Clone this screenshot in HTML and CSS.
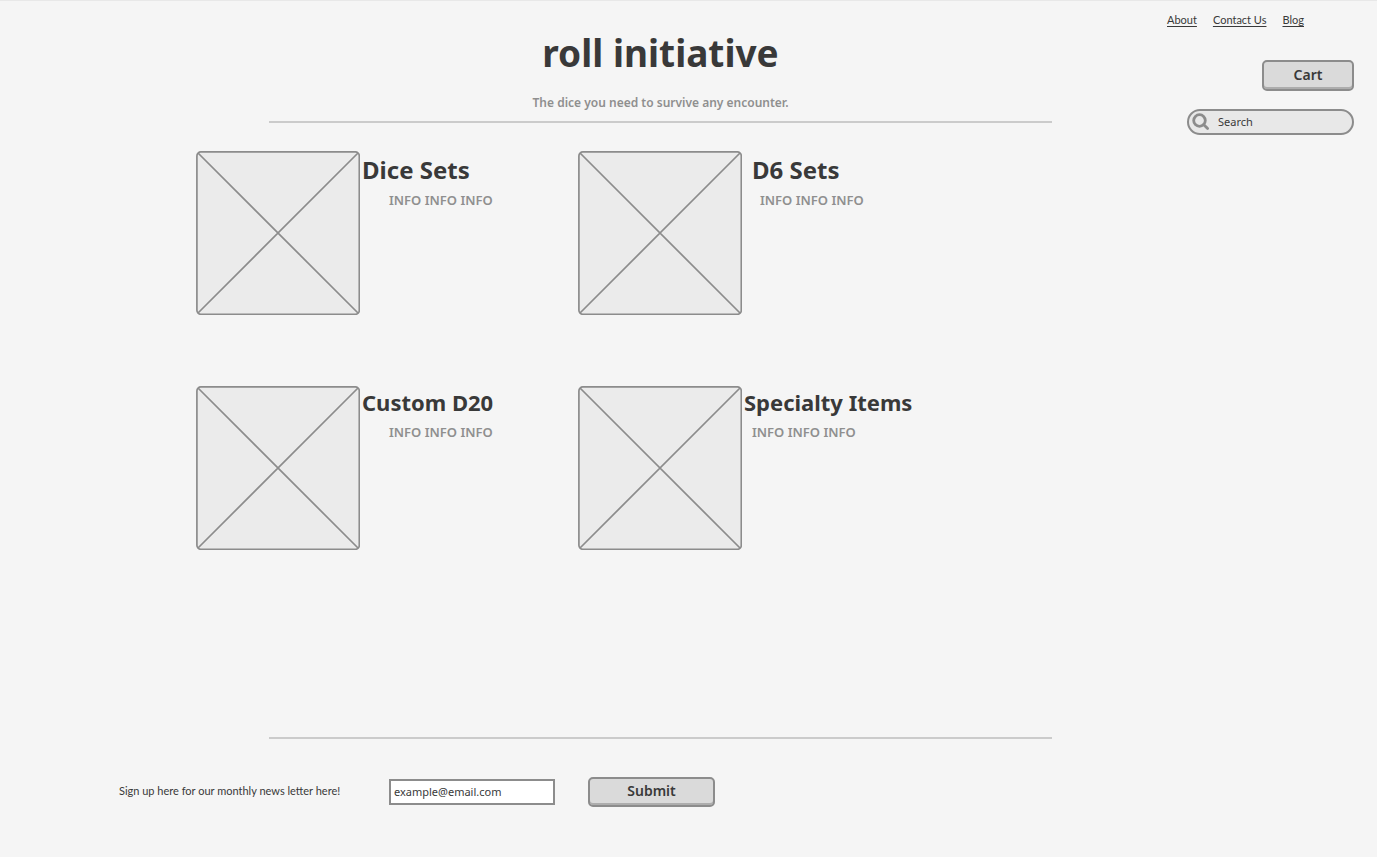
FILE: index.html
```html
<!DOCTYPE html>
<html lang="en">
<head>
<meta charset="utf-8">
<title>roll initiative</title>
<link rel="stylesheet" href="styles.css">
</head>
<body>
<header class="header">
  <div class="brand">
    <h1 class="brand-name">roll initiative</h1>
    <p class="tagline">The dice you need to survive any encounter.</p>
  </div>
  <div class="tools">
    <nav class="links">
      <a href="#about">About</a>
      <a href="#contact">Contact Us</a>
      <a href="#blog">Blog</a>
    </nav>
    <button class="button cart" type="button">Cart</button>
    <label class="search">
      <svg class="search-icon" viewBox="0 0 18 18" aria-hidden="true"><circle cx="7.5" cy="7.5" r="5.8"/><path d="M11.8 11.8L15.6 15.6"/></svg>
      <input class="search-input" type="search" placeholder="Search" aria-label="Search">
    </label>
  </div>
</header>
<main class="products">
  <article class="product">
    <svg class="picture" viewBox="0 0 164 164" aria-hidden="true"><rect x="0.9" y="0.9" width="162.4" height="162.4" rx="4"/><path d="M2 2L162 162M162 2L2 162"/></svg>
    <div class="details">
      <h2 class="product-name product-name-large">Dice Sets</h2>
      <p class="info info-deep">INFO INFO INFO</p>
    </div>
  </article>
  <article class="product">
    <svg class="picture" viewBox="0 0 164 164" aria-hidden="true"><rect x="0.9" y="0.9" width="162.4" height="162.4" rx="4"/><path d="M2 2L162 162M162 2L2 162"/></svg>
    <div class="details details-spaced">
      <h2 class="product-name product-name-large">D6 Sets</h2>
      <p class="info">INFO INFO INFO</p>
    </div>
  </article>
  <article class="product">
    <svg class="picture" viewBox="0 0 164 164" aria-hidden="true"><rect x="0.9" y="0.9" width="162.4" height="162.4" rx="4"/><path d="M2 2L162 162M162 2L2 162"/></svg>
    <div class="details details-raised">
      <h2 class="product-name">Custom D20</h2>
      <p class="info info-deep">INFO INFO INFO</p>
    </div>
  </article>
  <article class="product">
    <svg class="picture" viewBox="0 0 164 164" aria-hidden="true"><rect x="0.9" y="0.9" width="162.4" height="162.4" rx="4"/><path d="M2 2L162 162M162 2L2 162"/></svg>
    <div class="details details-raised">
      <h2 class="product-name">Specialty Items</h2>
      <p class="info">INFO INFO INFO</p>
    </div>
  </article>
</main>
<footer class="footer">
  <hr class="rule">
  <form class="signup">
    <label class="signup-label" for="email">Sign up here for our monthly news letter here!</label>
    <input class="email" id="email" type="email" placeholder="example@email.com">
    <button class="button submit" type="button">Submit</button>
  </form>
</footer>
</body>
</html>
```
FILE: styles.css
```css
* { box-sizing: border-box; }

body {
  margin: 0;
  min-height: 100vh;
  display: flex;
  flex-direction: column;
  border-top: 1px solid #e8e8e8;
  background: #f5f5f5;
  color: #393939;
  font-family: "Noto Sans", "Open Sans", sans-serif;
  font-size: 11px;
  line-height: 16px;
}

h1, h2, p { margin: 0; }

input, button {
  font: inherit;
  color: inherit;
}

input::placeholder {
  color: #393939;
  opacity: 1;
}

.header,
.footer {
  display: grid;
  grid-template-columns: 269fr 783fr 325fr;
}

.header { align-items: start; }

.brand {
  grid-column: 2;
  padding: 28px 0 9px;
  border-bottom: 2px solid #cbcbcb;
  text-align: center;
}

.brand-name {
  font-size: 37px;
  line-height: 48px;
}

.tagline {
  margin-top: 17px;
  color: #8f8f8f;
  font-size: 12px;
  font-weight: 600;
  line-height: 18px;
}

.tools {
  display: flex;
  flex-direction: column;
  align-items: flex-end;
  padding: 11px 23px 0 0;
}

.links {
  display: flex;
  gap: 16px;
  margin-right: 50px;
  font-family: Lato, "Noto Sans", sans-serif;
}

.links a {
  color: inherit;
  text-underline-offset: 2px;
}

.button {
  padding: 0 0 2px;
  border: 2px solid #8c8c8c;
  border-radius: 5px;
  background: #dadada;
  box-shadow: inset 0 -2px #adadad;
  font-size: 14px;
  font-weight: 600;
}

.cart {
  width: 92px;
  height: 31px;
  margin-top: 32px;
}

.search {
  display: flex;
  align-items: center;
  gap: 8px;
  width: 167px;
  height: 26px;
  margin-top: 18px;
  padding: 0 12px 0 3px;
  border: 2px solid #8c8c8c;
  border-radius: 13px;
  background: #e8e8e8;
}

.search-icon {
  flex: none;
  width: 18px;
  height: 18px;
  fill: none;
  stroke: #8c8c8c;
  stroke-width: 2.8;
  stroke-linecap: round;
}

.search-input {
  min-width: 0;
  flex: 1;
  padding: 0 0 1px;
  border: 0;
  background: none;
}

.products {
  flex: 1;
  display: grid;
  grid-template-columns: repeat(2, 382px);
  align-content: start;
  row-gap: 71px;
  padding: 16px 0 0 196px;
}

.product {
  display: flex;
  gap: 2px;
}

.picture {
  flex: none;
  width: 164px;
  height: 164px;
  fill: #ebebeb;
  stroke: #8c8c8c;
  stroke-width: 1.7;
}

.details {
  padding-top: 3px;
  white-space: nowrap;
}

.details-spaced { padding-left: 8px; }

.details-raised { padding-top: 0; }

.product-name {
  font-size: 22px;
  line-height: 32px;
}

.product-name-large { font-size: 24px; }

.info {
  margin-top: 5px;
  padding-left: 8px;
  color: #8f8f8f;
  font-size: 13px;
  font-weight: 600;
  line-height: 18px;
}

.info-deep { padding-left: 27px; }

.rule {
  grid-column: 2;
  width: 100%;
  height: 2px;
  margin: 0;
  border: 0;
  background: #cbcbcb;
}

.signup {
  grid-column: 1 / -1;
  display: flex;
  align-items: center;
  padding: 38px 0 50px 119px;
}

.signup-label {
  width: 270px;
  padding-bottom: 2px;
  font-family: Lato, "Noto Sans", sans-serif;
}

.email {
  width: 166px;
  height: 26px;
  margin-right: 33px;
  padding: 0 3px 2px;
  border: 2px solid #8c8c8c;
  background: #fff;
}

.submit {
  width: 127px;
  height: 30px;
}
```
